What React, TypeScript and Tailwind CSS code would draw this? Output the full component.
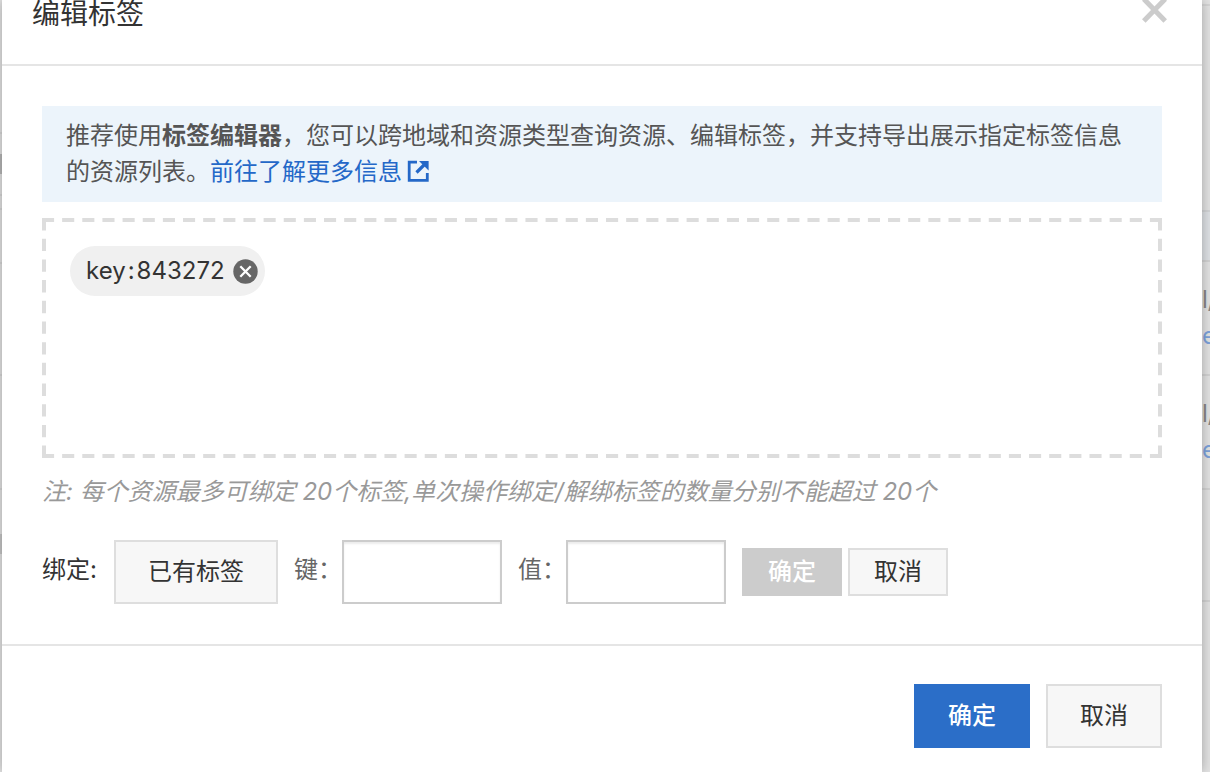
import { useState } from 'react';

const font = "font-['Inter','Noto_Sans_CJK_SC',sans-serif]";

const plainButton = 'border-2 border-[#dedede] bg-[#f7f7f7] text-[#333] whitespace-nowrap';
const textInput =
  'h-16 w-40 border-2 border-[#ccc] bg-white px-4 text-2xl text-[#333] shadow-[inset_0_2px_2px_rgba(0,0,0,0.08)] focus:outline-none';

function CloseIcon() {
  return (
    <svg width="26" height="24" viewBox="0 0 26 24" fill="none" stroke="#ccc" strokeWidth="5">
      <path d="M1.8 -1L23.2 21M23.2 -1L1.8 21" />
    </svg>
  );
}

function ExternalIcon() {
  return (
    <svg className="ml-1 inline-block align-[-3px]" width="24" height="24" viewBox="0 0 24 24" fill="none">
      <path d="M11 3.2H3.2V21.3H21.3V14" stroke="#2468c8" strokeWidth="2.8" />
      <path d="M10.5 13.5L19 5" stroke="#2468c8" strokeWidth="3.2" />
      <path d="M13 2H22.6V11.6Z" fill="#2468c8" />
    </svg>
  );
}

function RemoveIcon() {
  return (
    <svg width="25" height="25" viewBox="0 0 25 25" fill="none">
      <circle cx="12.5" cy="12.5" r="12.2" fill="#666" />
      <path d="M7.3 7.3L17.7 17.7M17.7 7.3L7.3 17.7" stroke="#fff" strokeWidth="2.3" />
    </svg>
  );
}

// pathLength keeps a full dash in every corner at any size
function DashedFrame() {
  return (
    <svg className="pointer-events-none absolute inset-0 h-full w-full" stroke="#ddd" strokeWidth="8" strokeDasharray="12 8" aria-hidden="true">
      <line x1="0" y1="0" x2="100%" y2="0" pathLength="1112" />
      <line x1="0" y1="100%" x2="100%" y2="100%" pathLength="1112" />
      <line x1="0" y1="0" x2="0" y2="100%" pathLength="232" />
      <line x1="100%" y1="0" x2="100%" y2="100%" pathLength="232" />
    </svg>
  );
}

function BackgroundRow() {
  return (
    <div className="h-[114px] overflow-hidden border-t-2 border-[#d4d4d4] pt-5 text-2xl leading-9 text-[#888]">
      <div>l/</div>
      <div className="text-[#7da3dc]">e</div>
    </div>
  );
}

export default function App() {
  const [tags, setTags] = useState([{ key: 'key', value: '843272' }]);
  const [key, setKey] = useState('');
  const [value, setValue] = useState('');

  function handleBind() {
    setTags([...tags, { key, value }]);
    handleReset();
  }

  function handleReset() {
    setKey('');
    setValue('');
  }

  return (
    <div className={`flex min-h-screen overflow-hidden bg-[#e4e4e4] text-2xl ${font}`}>
      <div className="w-0.5 shrink-0 bg-[#e4e4e4]">
        <div className="h-[134px] border-b-2 border-[#d8d8d8]" />
        <div className="mt-5 h-5 bg-[#b8b8b8]" />
        <div className="mt-5 h-4 border-y-2 border-[#d8d8d8]" />
        <div className="h-[54px] border-b-2 border-[#d8d8d8]" />
        <div className="h-28 border-b-2 border-[#d8d8d8]" />
        <div className="h-[114px] border-b-2 border-[#d8d8d8]" />
        <div className="mt-11 h-5 bg-[#c8c8c8]" />
      </div>

      <div
        role="dialog"
        aria-labelledby="dialog-title"
        className="relative z-10 flex min-w-0 flex-1 flex-col bg-white shadow-[0_0_12px_rgba(0,0,0,0.3)]"
      >
        <div className="flex h-[66px] items-start justify-between border-b-2 border-[#e5e5e5] pr-[34px] pl-[30px]">
          <h1 id="dialog-title" className="text-[28px] leading-7 text-[#333]">编辑标签</h1>
          <button type="button" aria-label="关闭">
            <CloseIcon />
          </button>
        </div>

        <div className="px-10 pt-10 pb-10">
          <p className="bg-[#ecf4fb] px-6 py-3 leading-9 text-[#555]">
            推荐使用<b>标签编辑器</b>，您可以跨地域和资源类型查询资源、编辑标签，并支持导出展示指定标签信息的资源列表。
            <a href="#" className="text-[#2468c8]">
              前往了解更多信息
              <ExternalIcon />
            </a>
          </p>

          <div className="relative mt-4 flex min-h-60 flex-wrap content-start gap-2 p-7">
            <DashedFrame />
            {tags.map((tag) => (
              <span key={tag.key} className="flex h-[50px] items-center rounded-full bg-[#f0f0f0] pr-[7px] pl-4 text-[#333]">
                {tag.key}
                <span className="mx-0.5">:</span>
                {tag.value}
                <button
                  type="button"
                  aria-label="删除标签"
                  className="ml-2"
                  onClick={() => setTags(tags.filter((t) => t.key !== tag.key))}
                >
                  <RemoveIcon />
                </button>
              </span>
            ))}
          </div>

          <p className="mt-4 leading-9 text-[#999] italic">
            注: 每个资源最多可绑定 20个标签,单次操作绑定/解绑标签的数量分别不能超过 20个
          </p>

          <div className="mt-[30px] flex items-center">
            <span className="w-[72px] shrink-0 pb-1 text-[#333]">绑定:</span>
            <button type="button" className={`h-16 w-[164px] ${plainButton}`}>已有标签</button>
            <label htmlFor="tag-key" className="ml-4 w-12 pb-1 text-[#666]">键：</label>
            <input id="tag-key" className={textInput} value={key} onChange={(e) => setKey(e.target.value)} />
            <label htmlFor="tag-value" className="ml-4 w-12 pb-1 text-[#666]">值：</label>
            <input id="tag-value" className={textInput} value={value} onChange={(e) => setValue(e.target.value)} />
            <button
              type="button"
              disabled={!key}
              onClick={handleBind}
              className="ml-4 h-12 w-[100px] bg-[#2b6ec8] font-medium text-white disabled:bg-[#ccc]"
            >
              确定
            </button>
            <button type="button" onClick={handleReset} className={`ml-1.5 h-12 w-[100px] ${plainButton}`}>取消</button>
          </div>
        </div>

        <div className="flex justify-end gap-4 border-t-2 border-[#e5e5e5] px-10 pt-[38px] pb-6">
          <button type="button" className="h-16 w-[116px] bg-[#2b6ec8] font-medium text-white">确定</button>
          <button type="button" className={`h-16 w-[116px] ${plainButton}`}>取消</button>
        </div>
      </div>

      <div className="w-2 shrink-0 overflow-hidden">
        <div className="h-1.5 border-b-2 border-[#d6d6d6]" />
        <div className="h-[206px] border-b-2 border-[#d4d6d8]" />
        <div className="h-12 bg-[#dfe2e6]" />
        <BackgroundRow />
        <BackgroundRow />
        <div className="h-[114px] border-y-2 border-[#d4d4d4]" />
      </div>
    </div>
  );
}
